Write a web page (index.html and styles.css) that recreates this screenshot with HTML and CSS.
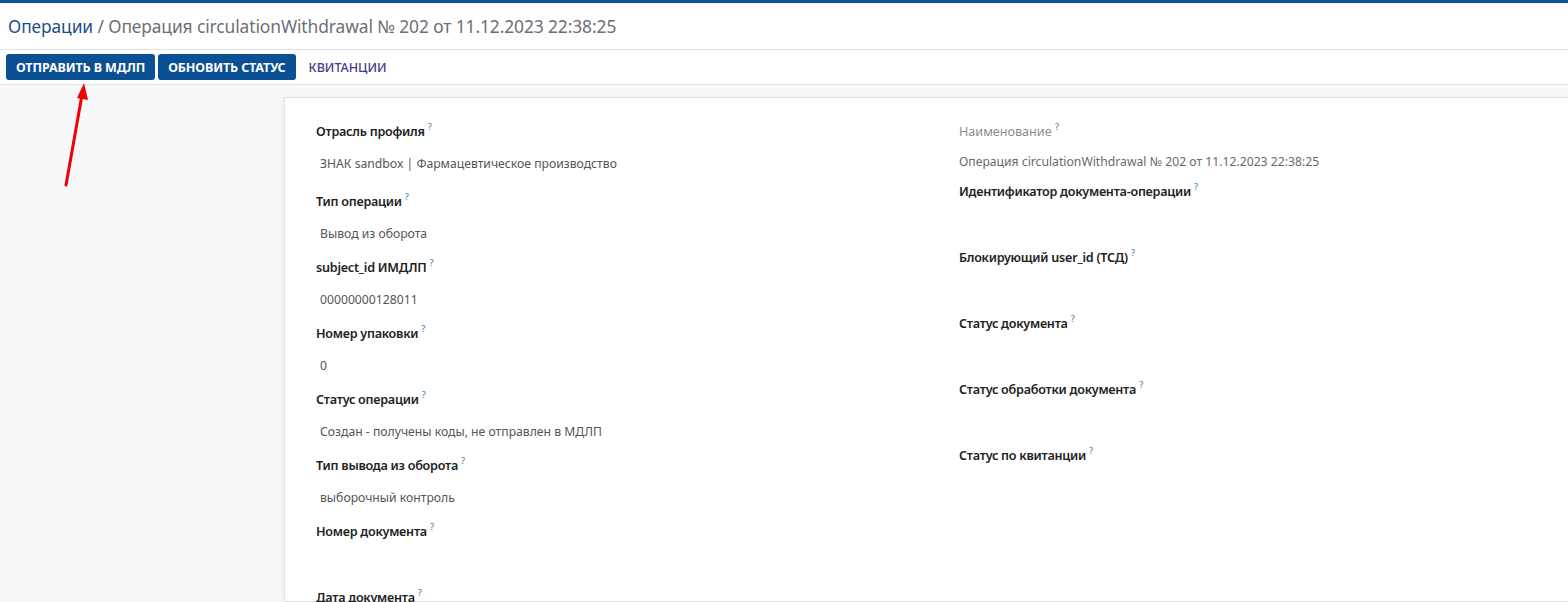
FILE: index.html
```html
<!DOCTYPE html>
<html lang="ru">
<head>
<meta charset="utf-8">
<title>Операция circulationWithdrawal № 202</title>
<link rel="stylesheet" href="styles.css">
</head>
<body>
<div class="topline"></div>
<header class="titlebar">
  <h1 class="title"><a class="crumb" href="#">Операции</a> <span class="sep">/</span> Операция circulationWithdrawal № 202 от 11.12.2023 22:38:25</h1>
</header>
<nav class="toolbar">
  <button class="btn">Отправить в МДЛП</button>
  <button class="btn">Обновить статус</button>
  <a class="link" href="#">Квитанции</a>
</nav>
<main class="content">
  <aside class="side"></aside>
  <section class="card">
    <div class="grid">
      <div class="col">
        <div class="field first">
          <div class="label">Отрасль профиля <sup class="q">?</sup></div>
          <div class="value">ЗНАК sandbox | Фармацевтическое производство</div>
        </div>
        <div class="field">
          <div class="label">Тип операции <sup class="q">?</sup></div>
          <div class="value">Вывод из оборота</div>
        </div>
        <div class="field">
          <div class="label">subject_id ИМДЛП <sup class="q">?</sup></div>
          <div class="value">00000000128011</div>
        </div>
        <div class="field">
          <div class="label">Номер упаковки <sup class="q">?</sup></div>
          <div class="value">0</div>
        </div>
        <div class="field">
          <div class="label">Статус операции <sup class="q">?</sup></div>
          <div class="value">Создан - получены коды, не отправлен в МДЛП</div>
        </div>
        <div class="field">
          <div class="label">Тип вывода из оборота <sup class="q">?</sup></div>
          <div class="value">выборочный контроль</div>
        </div>
        <div class="field">
          <div class="label">Номер документа <sup class="q">?</sup></div>
          <div class="value"></div>
        </div>
        <div class="field">
          <div class="label">Дата документа <sup class="q">?</sup></div>
          <div class="value"></div>
        </div>
      </div>
      <div class="col">
        <div class="field first muted">
          <div class="label">Наименование <sup class="q">?</sup></div>
          <div class="value">Операция circulationWithdrawal № 202 от 11.12.2023 22:38:25</div>
        </div>
        <div class="field">
          <div class="label">Идентификатор документа-операции <sup class="q">?</sup></div>
          <div class="value"></div>
        </div>
        <div class="field">
          <div class="label">Блокирующий user_id (ТСД) <sup class="q">?</sup></div>
          <div class="value"></div>
        </div>
        <div class="field">
          <div class="label">Статус документа <sup class="q">?</sup></div>
          <div class="value"></div>
        </div>
        <div class="field">
          <div class="label">Статус обработки документа <sup class="q">?</sup></div>
          <div class="value"></div>
        </div>
        <div class="field">
          <div class="label">Статус по квитанции <sup class="q">?</sup></div>
          <div class="value"></div>
        </div>
      </div>
    </div>
  </section>
</main>
<svg class="arrow" width="40" height="120" viewBox="0 0 40 120" aria-hidden="true">
  <line x1="8" y1="106" x2="24" y2="16" stroke="#f00000" stroke-width="3" stroke-linecap="round"/>
  <polygon points="26,4 19,19 30,21" fill="#f00000"/>
</svg>
</body>
</html>
```

FILE: styles.css
```css
* { box-sizing: border-box; }
html, body {
  margin: 0;
  padding: 0;
  height: 100%;
  overflow: hidden;
}
body {
  font-family: "Noto Sans", "Open Sans", "DejaVu Sans", sans-serif;
  background: #f7f8fa;
  color: #222;
  position: relative;
}
.topline {
  height: 3px;
  background: #0b4f95;
}
.titlebar {
  background: #fff;
  height: 47px;
  border-bottom: 1px solid #dfe1e5;
  display: flex;
  align-items: center;
  padding: 0 8px;
}
.title {
  margin: 0;
  font-size: 17.4px;
  font-weight: 400;
  color: #6b6f75;
  white-space: nowrap;
  letter-spacing: -0.1px;
}
.crumb {
  color: #1f4f8a;
  text-decoration: none;
}
.sep { color: #6b6f75; }
.toolbar {
  background: #fff;
  height: 35px;
  border-bottom: 1px solid #dfe1e5;
  display: flex;
  align-items: center;
  padding: 0 6px;
  gap: 3px;
}
.btn {
  height: 26px;
  border: none;
  border-radius: 3px;
  background: #0b4f95;
  color: #fff;
  font-family: inherit;
  font-size: 12.5px;
  font-weight: 700;
  text-transform: uppercase;
  padding: 0 10px;
  cursor: pointer;
  letter-spacing: -0.1px;
}
.link {
  margin-left: 10px;
  color: #46388c;
  font-size: 12.5px;
  font-weight: 500;
  text-transform: uppercase;
  text-decoration: none;
}
.content {
  display: flex;
  padding-top: 12px;
  height: calc(100% - 85px);
}
.side {
  flex: 0 0 284px;
}
.card {
  flex: 1;
  background: #fff;
  border: 1px solid #dde0e4;
  border-right: none;
  box-shadow: -2px 0 4px rgba(0, 0, 0, 0.04);
  padding: 24px 31px;
}
.grid {
  display: grid;
  grid-template-columns: 643px 1fr;
}
.field {
  margin-bottom: 14px;
}
.field.first { margin-bottom: 18px; }
.field.first.muted { margin-bottom: 10px; }
.label {
  font-size: 12.6px;
  font-weight: 600;
  line-height: 20px;
  color: #222;
  white-space: nowrap;
  letter-spacing: -0.25px;
}
.q {
  font-size: 9px;
  font-weight: 500;
  color: #4f86b3;
  vertical-align: top;
  position: relative;
  top: -5px;
}
.value {
  margin-top: 12px;
  min-height: 20px;
  line-height: 20px;
  font-size: 12.2px;
  color: #555;
  padding-left: 4px;
  white-space: nowrap;
}
.muted .label {
  color: #8a8d92;
  font-weight: 400;
  letter-spacing: 0;
}
.muted .value {
  padding-left: 0;
  margin-top: 10px;
  color: #666a70;
}
.arrow {
  position: absolute;
  left: 58px;
  top: 79px;
}
```
